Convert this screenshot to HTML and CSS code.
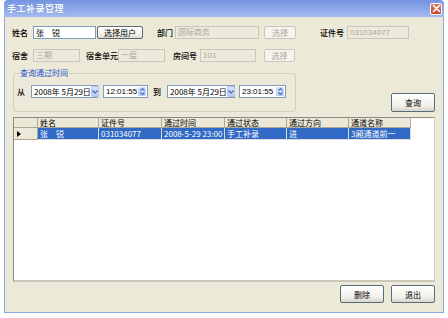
FILE: index.html
```html
<!DOCTYPE html>
<html lang="zh">
<head>
<meta charset="utf-8">
<title>手工补录管理</title>
<link rel="stylesheet" href="styles.css">
</head>
<body>
<div class="window">
  <div class="titlebar">
    <span class="title">手工补录管理</span>
    <span class="close"><svg width="9" height="9" viewBox="0 0 9 9"><path d="M1.5 1.5 L7.5 7.5 M7.5 1.5 L1.5 7.5" stroke="#fff" stroke-width="1.6" stroke-linecap="round"/></svg></span>
  </div>
  <div class="frame">
    <div class="row row1">
      <span class="lbl w21">姓名</span>
      <span class="inp w63">张　锐</span>
      <span class="btn b-user">选择用户</span>
      <span class="lbl l-dept">部门</span>
      <span class="inp dis w84">国际商务</span>
      <span class="btn dis b-sel1">选择</span>
      <span class="lbl l-id">证件号</span>
      <span class="inp dis w62">031034077</span>
    </div>
    <div class="row row2">
      <span class="lbl w21">宿舍</span>
      <span class="inp dis w47">三期</span>
      <span class="lbl l-unit">宿舍单元</span>
      <span class="inp dis w47">一层</span>
      <span class="lbl l-room">房间号</span>
      <span class="inp dis w56">101</span>
      <span class="btn dis b-sel2">选择</span>
    </div>
    <div class="qrow">
      <fieldset class="group">
        <legend>查询通过时间</legend>
        <div class="row trow">
          <span class="lbl w14">从</span>
          <span class="picker w67"><span class="ptext">2008年 5月29日</span><span class="dd"><svg width="6" height="4" viewBox="0 0 6 4"><path d="M0.5 0.5 L3 3 L5.5 0.5" fill="none" stroke="#4d6fb8" stroke-width="1.3"/></svg></span></span>
          <span class="picker time t1"><span class="ptext">12:01:55</span><span class="spin"><svg width="5" height="9" viewBox="0 0 5 9"><path d="M0.5 3.5 L2.5 1.5 L4.5 3.5 M0.5 5.5 L2.5 7.5 L4.5 5.5" fill="none" stroke="#4d6fb8" stroke-width="1.1"/></svg></span></span>
          <span class="lbl l-to">到</span>
          <span class="picker w68"><span class="ptext">2008年 5月29日</span><span class="dd"><svg width="6" height="4" viewBox="0 0 6 4"><path d="M0.5 0.5 L3 3 L5.5 0.5" fill="none" stroke="#4d6fb8" stroke-width="1.3"/></svg></span></span>
          <span class="picker time t2"><span class="ptext">23:01:55</span><span class="spin"><svg width="5" height="9" viewBox="0 0 5 9"><path d="M0.5 3.5 L2.5 1.5 L4.5 3.5 M0.5 5.5 L2.5 7.5 L4.5 5.5" fill="none" stroke="#4d6fb8" stroke-width="1.1"/></svg></span></span>
        </div>
      </fieldset>
      <span class="btn b-query">查询</span>
    </div>
    <div class="grid">
      <div class="grow head">
        <span class="rh"></span>
        <span class="c c1">姓名</span>
        <span class="c c2">证件号</span>
        <span class="c c3">通过时间</span>
        <span class="c c4">通过状态</span>
        <span class="c c5">通过方向</span>
        <span class="c c6">通道名称</span>
      </div>
      <div class="grow sel">
        <span class="rh"><svg width="4" height="6" viewBox="0 0 4 6"><path d="M0 0 L4 3 L0 6 Z" fill="#000"/></svg></span>
        <span class="c c1">张　锐</span>
        <span class="c c2">031034077</span>
        <span class="c c3">2008-5-29 23:00</span>
        <span class="c c4">手工补录</span>
        <span class="c c5">进</span>
        <span class="c c6">3厢通道前一</span>
      </div>
    </div>
    <div class="actions">
      <span class="btn b-act">删除</span>
      <span class="btn b-act">退出</span>
    </div>
  </div>
</div>
</body>
</html>
```

FILE: styles.css
```css
html, body {
  margin: 0;
  padding: 0;
  background: #ffffff;
}
body {
  font-family: "Liberation Sans", "Noto Sans CJK SC", sans-serif;
  font-size: 8px;
  color: #000;
}
.window {
  margin-left: 4px;
  width: 440px;
  height: 313px;
  display: flex;
  flex-direction: column;
}
.titlebar {
  height: 17px;
  flex: none;
  box-sizing: border-box;
  background: linear-gradient(#7494e0 0%, #86a3e6 40%, #a4bbef 100%);
  border-radius: 4px 4px 0 0;
  display: flex;
  align-items: center;
  justify-content: space-between;
  padding: 0 2px 0 3px;
}
.title {
  color: #ffffff;
  font-family: "Noto Sans CJK SC", sans-serif;
  font-size: 9px;
  font-weight: 700;
  letter-spacing: 0.5px;
  text-shadow: 0 0 1px #4a6cc0;
}
.close {
  width: 12px;
  height: 12px;
  box-sizing: border-box;
  border: 1px solid #ffffff;
  border-radius: 2px;
  background: linear-gradient(#e07a63, #c8452d);
  display: flex;
  align-items: center;
  justify-content: center;
}
.frame {
  flex: 1;
  background: #ece9d8;
  border: 1px solid #8ea6dc;
  border-top: none;
  padding: 9px 8px 9px 7px;
  display: flex;
  flex-direction: column;
}
.row {
  display: flex;
  align-items: center;
  height: 13px;
  flex: none;
}
.row2 { margin-top: 10px; }
.lbl {
  font-family: "Noto Sans CJK SC", sans-serif;
  font-weight: 500;
  white-space: nowrap;
  flex: none;
}
.w21 { width: 21px; }
.w14 { width: 14px; }
.l-dept { margin-left: 14px; width: 18px; }
.l-id { margin-left: 24px; width: 27px; }
.l-unit { margin-left: 6px; width: 32px; }
.l-room { margin-left: 8px; width: 27px; }
.l-to { margin-left: 5px; width: 14px; }
.inp {
  height: 13px;
  box-sizing: border-box;
  background: #ffffff;
  border: 1px solid #7f9db9;
  padding-left: 2px;
  line-height: 11px;
  white-space: nowrap;
  overflow: hidden;
  font-family: "Noto Sans CJK SC", sans-serif;
  flex: none;
}
.inp.dis {
  background: #ebeadb;
  border-color: #c9c7ba;
  color: #aca899;
  font-family: "Liberation Sans", "Noto Sans CJK SC", sans-serif;
}
.w63 { width: 63px; }
.w84 { width: 84px; }
.w62 { width: 62px; }
.w47 { width: 47px; }
.w56 { width: 56px; }
.btn {
  box-sizing: border-box;
  height: 13px;
  border: 1px solid #5a6b7e;
  border-radius: 2px;
  background: linear-gradient(#ffffff, #f1f0ea 70%, #d8d5c8);
  display: flex;
  align-items: center;
  justify-content: center;
  font-family: "Noto Sans CJK SC", sans-serif;
  white-space: nowrap;
  flex: none;
}
.btn.dis {
  border-color: #c9c7ba;
  background: #f4f3ee;
  color: #aca899;
}
.b-user { width: 46px; margin-left: 1px; }
.b-sel1 { width: 32px; margin-left: 5px; }
.b-sel2 { width: 31px; margin-left: 8px; }
.qrow {
  display: flex;
  align-items: flex-end;
  margin-top: 6px;
  flex: none;
}
.group {
  margin: 0 0 0 1px;
  width: 283px;
  box-sizing: border-box;
  border: 1px solid #d0d0bf;
  border-radius: 3px;
  padding: 7px 0 13px 3px;
  min-width: 0;
}
.group legend {
  color: #1c4fce;
  font-family: "Noto Sans CJK SC", sans-serif;
  line-height: 10px;
  padding: 0 1px;
  margin-left: 2px;
}
.picker {
  height: 13px;
  box-sizing: border-box;
  background: #ffffff;
  border: 1px solid #7f9db9;
  display: flex;
  align-items: center;
  justify-content: space-between;
  padding: 0 1px 0 2px;
  white-space: nowrap;
  flex: none;
  font-family: "Noto Sans CJK SC", sans-serif;
}
.ptext { line-height: 11px; }
.w67 { width: 67px; }
.w68 { width: 68px; }
.t1 { width: 45px; margin-left: 5px; }
.t2 { width: 47px; margin-left: 4px; }
.time { font-family: "Liberation Sans", sans-serif; }
.dd {
  width: 10px;
  height: 9px;
  background: linear-gradient(#d8e4fc, #b7cbf6);
  border: 1px solid #b1c5ef;
  border-radius: 1px;
  display: flex;
  align-items: center;
  justify-content: center;
}
.spin {
  width: 8px;
  height: 9px;
  background: linear-gradient(#d8e4fc, #b7cbf6);
  border-radius: 1px;
  display: flex;
  align-items: center;
  justify-content: center;
}
.b-query {
  margin-left: auto;
  width: 44px;
  height: 19px;
}
.grid {
  margin: 5px 0 0 1px;
  height: 165px;
  box-sizing: border-box;
  background: #ffffff;
  border: 1px solid #8a8a80;
  border-right-color: #d4d0c8;
  border-bottom: 2px solid #c9c7ba;
  flex: none;
}
.grow {
  display: flex;
}
.grow .rh {
  width: 24px;
  flex: none;
  box-sizing: border-box;
  background: #ece9d8;
  border-right: 1px solid #aca899;
  border-bottom: 1px solid #aca899;
  display: flex;
  align-items: center;
  padding-left: 3px;
}
.grow .c {
  box-sizing: border-box;
  padding-left: 2px;
  border-right: 1px solid #aca899;
  border-bottom: 1px solid #aca899;
  white-space: nowrap;
  overflow: hidden;
  font-family: "Noto Sans CJK SC", sans-serif;
}
.head {
  height: 10px;
  line-height: 9px;
}
.head .c { background: #ece9d8; }
.sel {
  height: 12px;
  line-height: 11px;
}
.sel .c {
  background: #316ac5;
  color: #ffffff;
  border-right-color: #dcdcdc;
  border-bottom-color: #dcdcdc;
}
.c1 { width: 61px; }
.c2 { width: 63px; }
.c3 { width: 63px; }
.c4 { width: 62px; }
.c5 { width: 62px; }
.c6 { width: 62px; }
.actions {
  display: flex;
  justify-content: flex-end;
  gap: 7px;
  margin-top: 3px;
  flex: none;
}
.b-act {
  width: 44px;
  height: 18px;
}
```
